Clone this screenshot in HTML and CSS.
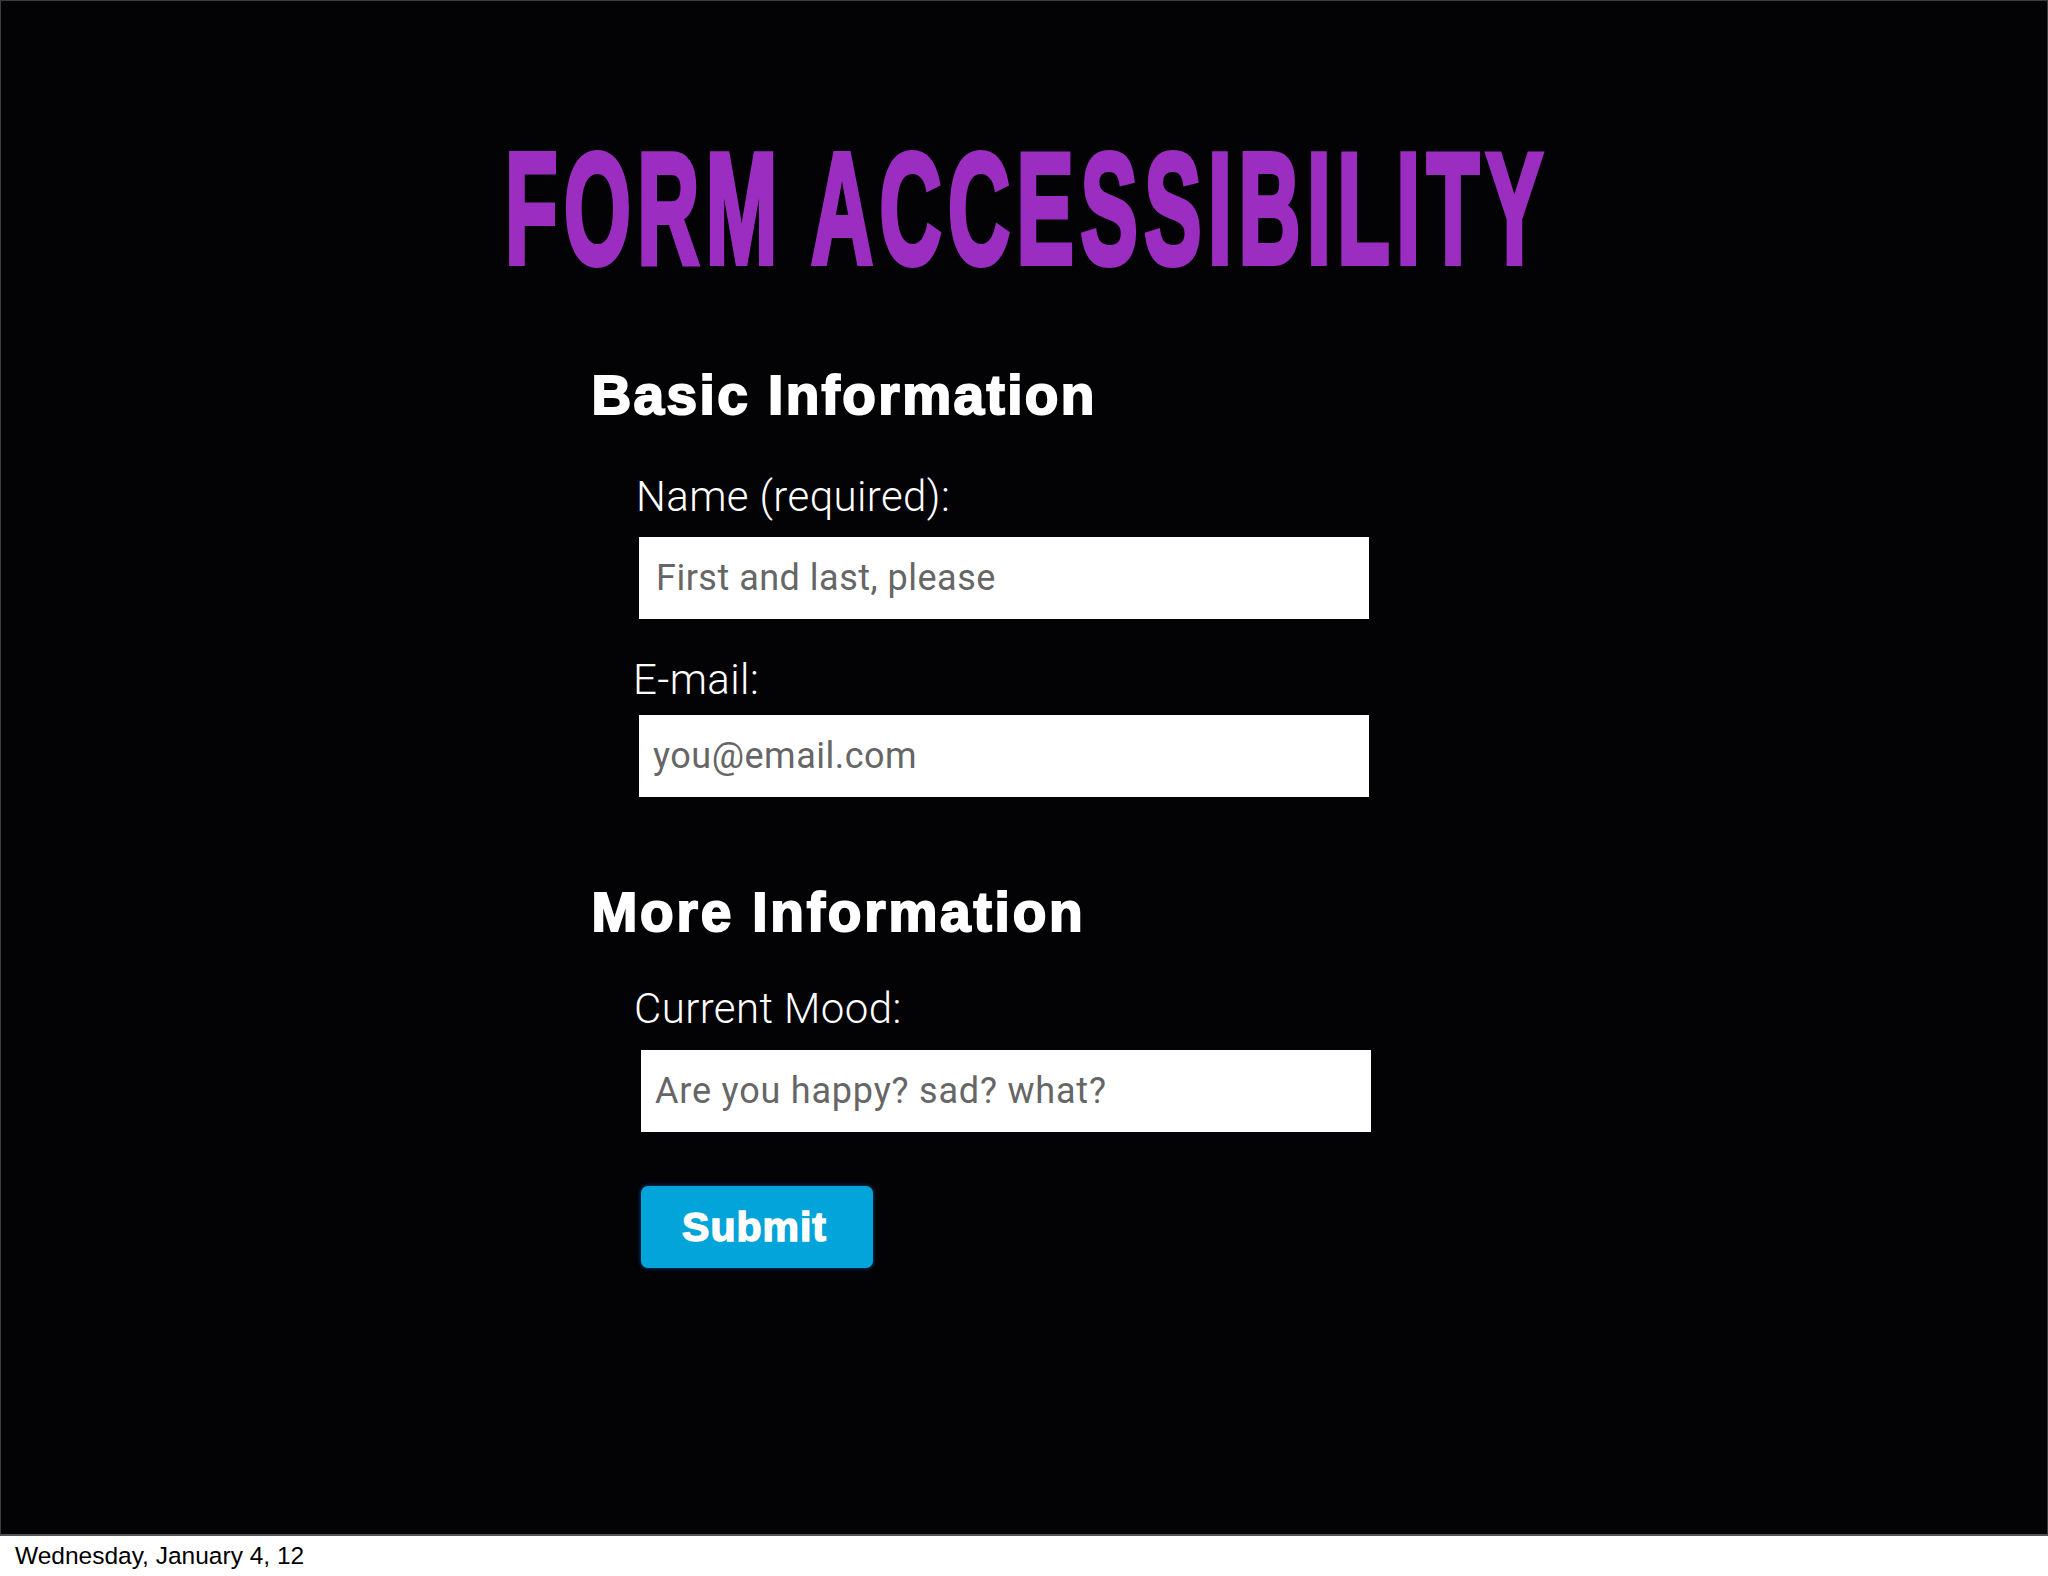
FILE: index.html
```html
<!DOCTYPE html>
<html lang="en">
<head>
<meta charset="utf-8">
<title>Form Accessibility</title>
<link rel="stylesheet" href="styles.css">
</head>
<body>
<div class="slide">
  <h1 class="title"><span class="title-text">FORM ACCESSIBILITY</span></h1>
  <form class="form">
    <h2 class="section-head first">Basic Information</h2>
    <label class="field-label l-name" for="name">Name (required):</label>
    <input class="field f-name" id="name" type="text" placeholder="First and last, please">
    <label class="field-label l-email" for="email">E-mail:</label>
    <input class="field f-email" id="email" type="email" placeholder="you@email.com">
    <h2 class="section-head second">More Information</h2>
    <label class="field-label l-mood" for="mood">Current Mood:</label>
    <input class="field f-mood" id="mood" type="text" placeholder="Are you happy? sad? what?">
    <button class="submit" type="submit">Submit</button>
  </form>
</div>
<div class="footer">Wednesday, January 4, 12</div>
</body>
</html>
```

FILE: styles.css
```css
html, body {
  margin: 0;
  padding: 0;
  background: #ffffff;
}

.slide {
  box-sizing: border-box;
  height: 1536px;
  background: #030205;
  border: 1px solid #3e3e3e;
  border-bottom: 2px solid #555555;
  padding-top: 128px;
}

.title {
  margin: 0;
  text-align: center;
  font-family: "Liberation Sans", Arial, sans-serif;
  font-weight: 700;
  font-size: 158px;
  line-height: 158px;
  height: 158px;
  color: #9c2dc1;
}

.title-text {
  display: inline-block;
  padding-left: 12px;
  letter-spacing: 12px;
  transform: scaleX(0.5435);
  transform-origin: center;
  -webkit-text-stroke: 6px #9c2dc1;
  white-space: nowrap;
}

.form {
  display: flex;
  flex-direction: column;
  align-items: flex-start;
  padding-left: 588px;
}

.section-head {
  margin: 0 0 0 2.5px;
  font-family: "Liberation Sans", Arial, sans-serif;
  font-weight: 700;
  font-size: 55px;
  line-height: 67px;
  letter-spacing: 2.8px;
  color: #ffffff;
  -webkit-text-stroke: 2px #ffffff;
}

.section-head.first { margin-top: 75px; letter-spacing: 2.4px; }
.section-head.second { margin-top: 82px; }

.field-label {
  font-family: Roboto, "Liberation Sans", sans-serif;
  font-weight: 300;
  font-size: 42px;
  line-height: 49px;
  letter-spacing: 0.4px;
  color: #ffffff;
  margin-left: 45px;
}

.l-name { margin-top: 43px; margin-left: 47px; }
.l-email { margin-top: 36px; margin-left: 44px; }
.l-mood { margin-top: 38px; }

.field {
  box-sizing: border-box;
  width: 730px;
  height: 82px;
  border: none;
  outline: none;
  background: #ffffff;
  padding: 0 16px;
  font-family: Roboto, "Liberation Sans", sans-serif;
  font-weight: 400;
  font-size: 36px;
  letter-spacing: 0.5px;
  color: #333333;
  margin-left: 50px;
}

.field::placeholder {
  color: #666666;
  opacity: 1;
}

.f-name { margin-top: 16px; padding-left: 17px; }
.f-email { margin-top: 11px; padding-left: 14px; }
.f-mood { margin-top: 17px; margin-left: 52px; padding-left: 14px; letter-spacing: 0.8px; }

.submit {
  margin-top: 54px;
  margin-left: 52px;
  width: 232px;
  height: 82px;
  border: none;
  border-radius: 7px;
  background: #03a4d9;
  box-shadow: 0 0 4px rgba(0, 110, 200, 0.7);
  color: #ffffff;
  font-family: "Liberation Sans", Arial, sans-serif;
  font-weight: 700;
  font-size: 41px;
  letter-spacing: 1px;
  -webkit-text-stroke: 1.5px #ffffff;
  padding: 0 5px 0 0;
  cursor: pointer;
}

.footer {
  font-family: "Liberation Sans", Arial, sans-serif;
  font-size: 24.5px;
  line-height: 28px;
  color: #000000;
  padding: 6px 0 0 15px;
}
```
